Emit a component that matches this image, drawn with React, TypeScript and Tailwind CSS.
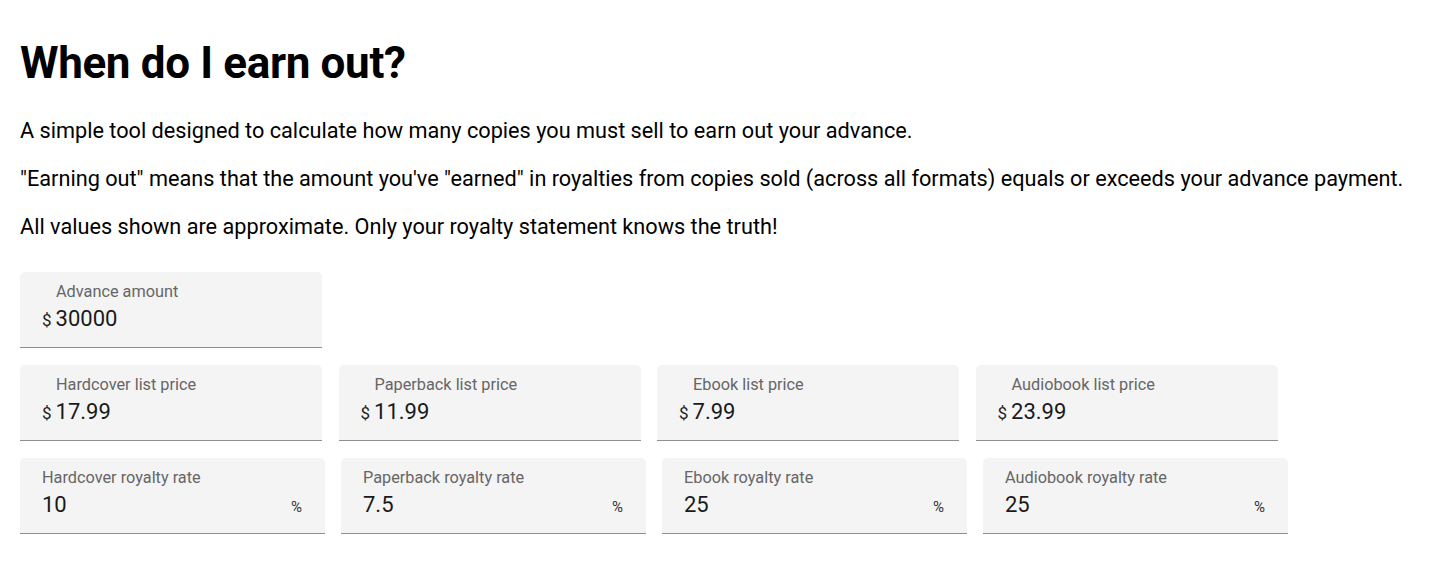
import React from "react";

type FieldProps = {
  label: string;
  value: string;
  adornment?: "$" | "%";
  width: string;
};

function Field({ label, value, adornment, width }: FieldProps) {
  const dollar = adornment === "$";
  return (
    <div
      className={`${width} h-[76px] shrink-0 rounded-t-[5px] bg-[#f4f4f4] border-b border-[#8f8f8f]`}
    >
      <div
        className={`pt-[10px] text-[16.3px] leading-[20px] text-[#666666] ${
          dollar ? "pl-[36px]" : "pl-[22px]"
        }`}
      >
        {label}
      </div>
      <div className="mt-[4px] flex items-baseline pl-[22px] pr-[23px] h-[26px]">
        {dollar && (
          <span className="text-[17px] leading-[26px] text-[#222222] mr-[4px]">$</span>
        )}
        <span className="flex-1 text-[22px] leading-[26px] text-[#1a1a1a]">{value}</span>
        {adornment === "%" && (
          <span className="text-[15px] leading-[26px] text-[#333333]">%</span>
        )}
      </div>
    </div>
  );
}

export default function App() {
  return (
    <div
      className="min-h-[563px] bg-white px-5 pt-[37px] text-black"
      style={{ fontFamily: "Roboto, 'Liberation Sans', sans-serif" }}
    >
      <h1 className="text-[44px] font-bold leading-[52px] tracking-[-0.35px]">
        When do I earn out?
      </h1>
      <div className="mt-[28px] flex flex-col gap-[20px] text-[21.7px] leading-[28px]">
        <p>
          A simple tool designed to calculate how many copies you must sell to earn out your
          advance.
        </p>
        <p>
          "Earning out" means that the amount you've "earned" in royalties from copies sold
          (across all formats) equals or exceeds your advance payment.
        </p>
        <p>All values shown are approximate. Only your royalty statement knows the truth!</p>
      </div>
      <div className="mt-[31px] flex flex-col gap-[17px]">
        <div className="flex">
          <Field label="Advance amount" value="30000" adornment="$" width="w-[302px]" />
        </div>
        <div className="flex gap-[16.5px]">
          <Field label="Hardcover list price" value="17.99" adornment="$" width="w-[302px]" />
          <Field label="Paperback list price" value="11.99" adornment="$" width="w-[302px]" />
          <Field label="Ebook list price" value="7.99" adornment="$" width="w-[302px]" />
          <Field label="Audiobook list price" value="23.99" adornment="$" width="w-[302px]" />
        </div>
        <div className="flex gap-[16px]">
          <Field label="Hardcover royalty rate" value="10" adornment="%" width="w-[305px]" />
          <Field label="Paperback royalty rate" value="7.5" adornment="%" width="w-[305px]" />
          <Field label="Ebook royalty rate" value="25" adornment="%" width="w-[305px]" />
          <Field label="Audiobook royalty rate" value="25" adornment="%" width="w-[305px]" />
        </div>
      </div>
    </div>
  );
}
